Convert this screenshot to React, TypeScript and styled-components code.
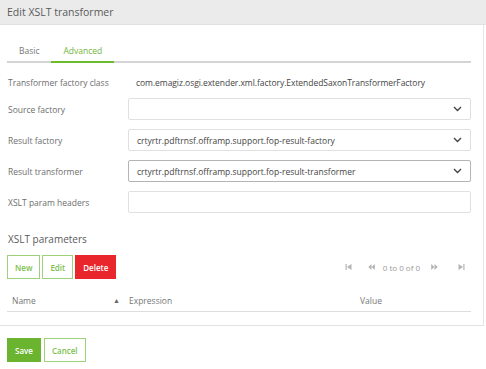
import styled, { createGlobalStyle } from 'styled-components'

const GlobalStyle = createGlobalStyle`
  html, body {
    margin: 0;
    padding: 0;
    background: #ffffff;
  }
  body {
    font-family: 'Open Sans', 'Liberation Sans', sans-serif;
    font-size: 9px;
    color: #555555;
  }
  * {
    box-sizing: border-box;
  }
`

const green = '#72b53b'

const Dialog = styled.div`
  width: 486px;
  height: 369px;
  display: flex;
  flex-direction: column;
  background: #ffffff;
`

const Header = styled.div`
  height: 25px;
  flex: none;
  display: flex;
  align-items: center;
  padding-left: 7px;
  background: #ebebeb;
  border-bottom: 1px solid #e2e2e2;
  font-size: 10.5px;
  color: #5a5a5a;
`

const Body = styled.div`
  height: 301px;
  flex: none;
  border-right: 1px solid #e6e6e6;
  border-bottom: 1px solid #e2e2e2;
  width: 484px;
  padding: 0 12px 0 7px;
`

const Tabs = styled.div`
  margin-top: 17px;
  display: flex;
  border-bottom: 2px solid #d4d4d6;
  height: 21px;
`

const Tab = styled.div<{ $active?: boolean }>`
  padding: 0 12px;
  height: 21px;
  line-height: 18px;
  color: ${(p) => (p.$active ? green : '#777777')};
  border-bottom: 2px solid ${(p) => (p.$active ? '#6cbd2e' : 'transparent')};
  margin-bottom: -2px;
  font-size: 8.5px;
`

const Form = styled.div`
  margin-top: 13px;
  display: flex;
  flex-direction: column;
  gap: 9px;
`

const Row = styled.div`
  display: flex;
  align-items: center;
  min-height: 13px;
`

const Label = styled.div`
  width: 121px;
  padding-left: 1px;
  flex: none;
  color: #6e6e6e;
  font-size: 8.5px;
`

const Value = styled.div`
  padding-left: 8px;
  color: #444444;
  font-size: 8.5px;
  letter-spacing: -0.05px;
`

const Field = styled.div<{ $focus?: boolean }>`
  flex: 1;
  height: 22px;
  border: 1px solid ${(p) => (p.$focus ? '#b4b4b4' : '#e0e0e0')};
  border-radius: 2px;
  display: flex;
  align-items: center;
  justify-content: space-between;
  padding: 0 8px 0 8px;
  color: #444444;
  font-size: 8.5px;
  background: #ffffff;
`

const Section = styled.div`
  margin-top: 19px;
  font-size: 10px;
  color: #5a5a5a;
  padding-left: 1px;
`

const Toolbar = styled.div`
  margin-top: 9px;
  display: flex;
  align-items: center;
  justify-content: space-between;
`

const Buttons = styled.div`
  display: flex;
  gap: 2px;
`

const Button = styled.button<{ $variant?: 'outline' | 'danger' | 'primary' }>`
  height: 24px;
  padding: 0 7px;
  font-family: inherit;
  font-size: 8px;
  font-weight: 600;
  border-radius: 0;
  cursor: pointer;
  border: 1px solid
    ${(p) => (p.$variant === 'danger' ? '#e8262c' : '#9ed27a')};
  background: ${(p) =>
    p.$variant === 'danger'
      ? '#e8262c'
      : p.$variant === 'primary'
        ? '#6ab42f'
        : '#ffffff'};
  color: ${(p) =>
    p.$variant === 'danger' || p.$variant === 'primary' ? '#ffffff' : '#7cbf4d'};
  ${(p) => p.$variant === 'primary' && 'border-color: #6ab42f;'}
`

const Pager = styled.div`
  display: flex;
  align-items: center;
  color: #9a9a9a;
  font-size: 8px;
  margin-right: 6px;
`

const PagerIcon = styled.svg<{ $gap?: number }>`
  width: 7px;
  height: 8px;
  margin-right: ${(p) => p.$gap ?? 0}px;
  fill: #b4b4b4;
`

const PagerText = styled.span`
  margin: 0 11px 0 0;
`

const Table = styled.div`
  margin-top: 10px;
  display: grid;
  grid-template-columns: 101px 16px 231px 1fr;
  align-items: center;
  border-bottom: 1px solid #dedede;
  height: 23px;
  padding-left: 5px;
  color: #777777;
  font-size: 8.5px;
`

const SortArrow = styled.span`
  font-size: 7px;
  color: #666666;
`

const Footer = styled.div`
  display: flex;
  gap: 3px;
  padding: 12px 0 0 7px;
`

const Chevron = () => (
  <svg width="9" height="6" viewBox="0 0 9 6">
    <path d="M1 1 L4.5 4.5 L8 1" fill="none" stroke="#444" strokeWidth="1.4" />
  </svg>
)

export default function App() {
  return (
    <>
      <GlobalStyle />
      <Dialog>
        <Header>Edit XSLT transformer</Header>
        <Body>
          <Tabs>
            <Tab>Basic</Tab>
            <Tab $active>Advanced</Tab>
          </Tabs>
          <Form>
            <Row>
              <Label>Transformer factory class</Label>
              <Value>com.emagiz.osgi.extender.xml.factory.ExtendedSaxonTransformerFactory</Value>
            </Row>
            <Row>
              <Label>Source factory</Label>
              <Field>
                <span />
                <Chevron />
              </Field>
            </Row>
            <Row>
              <Label>Result factory</Label>
              <Field>
                <span>crtyrtr.pdftrnsf.offramp.support.fop-result-factory</span>
                <Chevron />
              </Field>
            </Row>
            <Row>
              <Label>Result transformer</Label>
              <Field $focus>
                <span>crtyrtr.pdftrnsf.offramp.support.fop-result-transformer</span>
                <Chevron />
              </Field>
            </Row>
            <Row>
              <Label>XSLT param headers</Label>
              <Field />
            </Row>
          </Form>
          <Section>XSLT parameters</Section>
          <Toolbar>
            <Buttons>
              <Button $variant="outline">New</Button>
              <Button $variant="outline">Edit</Button>
              <Button $variant="danger">Delete</Button>
            </Buttons>
            <Pager>
              <PagerIcon viewBox="0 0 7 8" $gap={16}>
                <rect x="0.5" y="1" width="1.2" height="6" />
                <path d="M6.5 1 L2 4 L6.5 7 Z" />
              </PagerIcon>
              <PagerIcon viewBox="0 0 7 8" $gap={8}>
                <path d="M3.5 1 L0.3 4 L3.5 7 Z M6.8 1 L3.6 4 L6.8 7 Z" />
              </PagerIcon>
              <PagerText>0 to 0 of 0</PagerText>
              <PagerIcon viewBox="0 0 7 8" $gap={20}>
                <path d="M0.2 1 L3.4 4 L0.2 7 Z M3.5 1 L6.7 4 L3.5 7 Z" />
              </PagerIcon>
              <PagerIcon viewBox="0 0 7 8">
                <path d="M0.5 1 L5 4 L0.5 7 Z" />
                <rect x="5.3" y="1" width="1.2" height="6" />
              </PagerIcon>
            </Pager>
          </Toolbar>
          <Table>
            <span>Name</span>
            <SortArrow>▲</SortArrow>
            <span>Expression</span>
            <span>Value</span>
          </Table>
        </Body>
        <Footer>
          <Button $variant="primary">Save</Button>
          <Button $variant="outline">Cancel</Button>
        </Footer>
      </Dialog>
    </>
  )
}
